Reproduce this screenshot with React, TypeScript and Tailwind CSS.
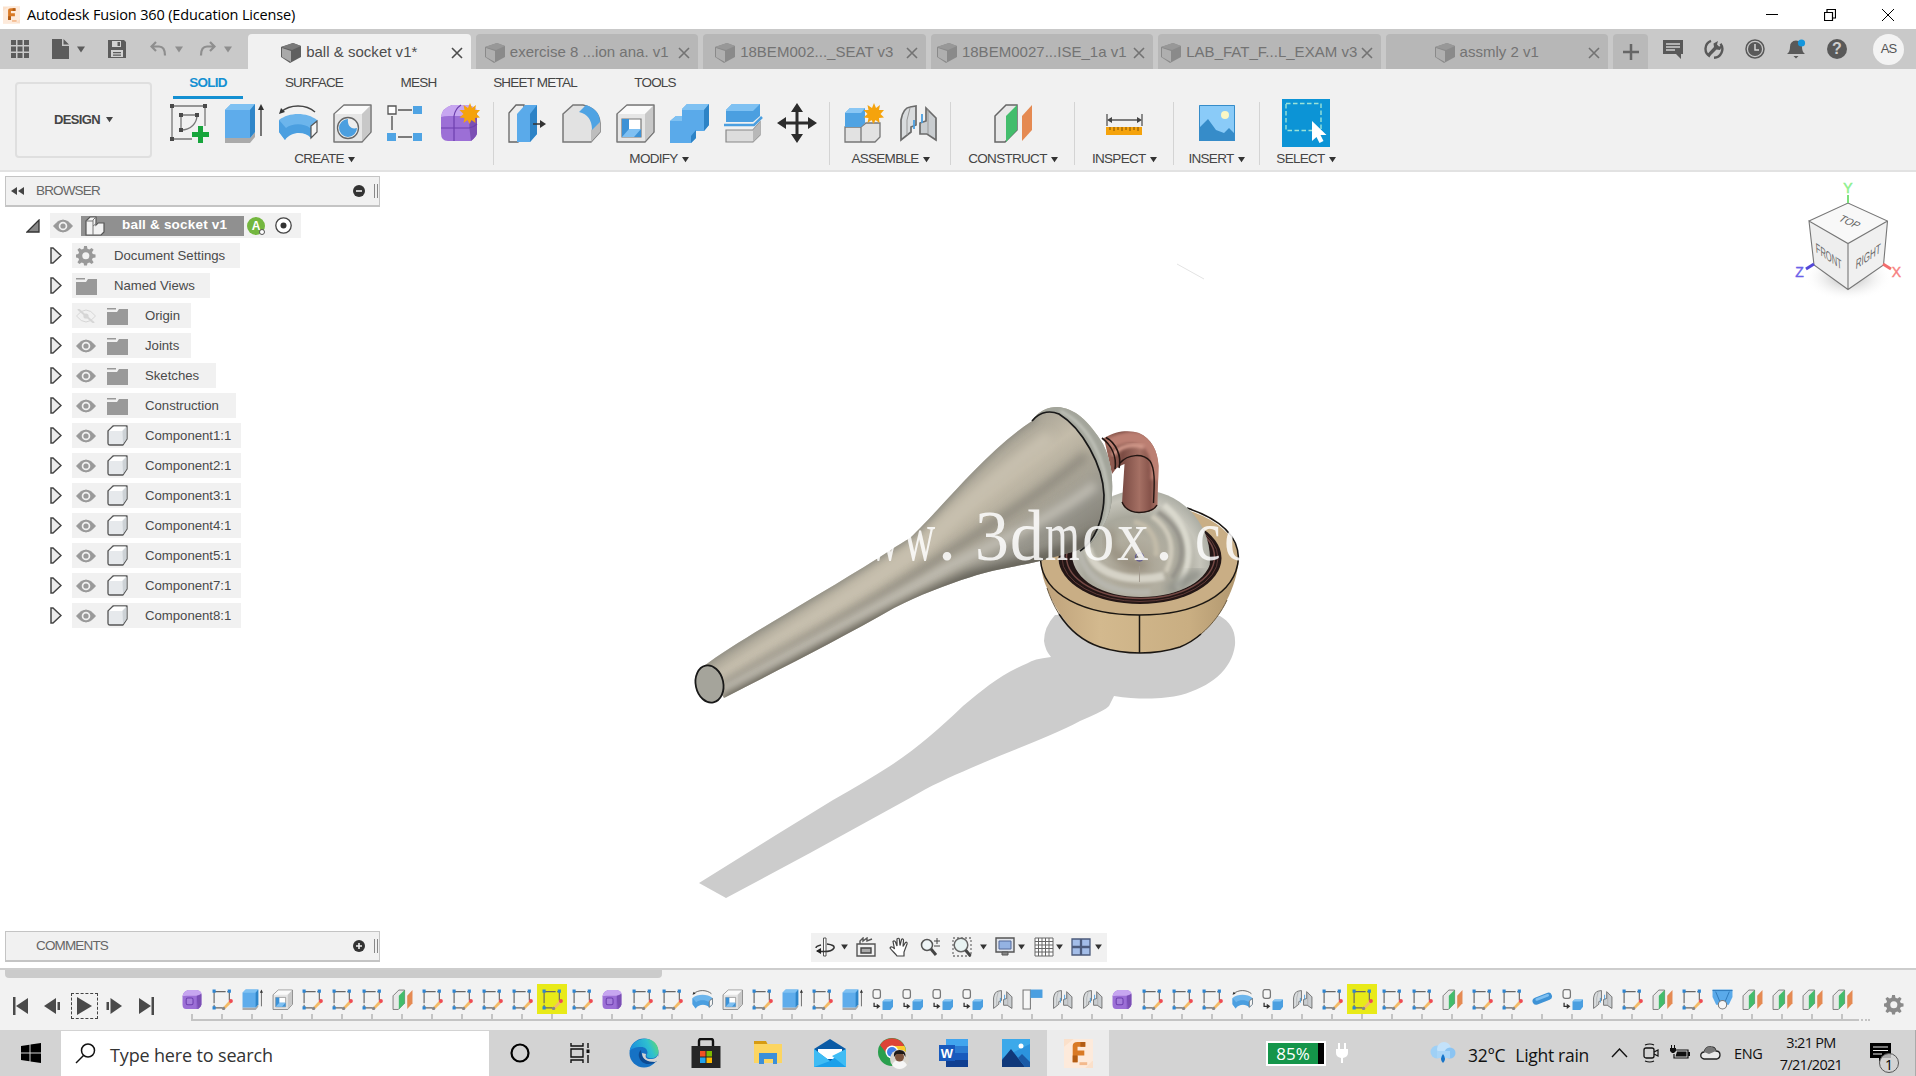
import type { ReactNode } from 'react';
import { clsx } from 'clsx';

type IconProps = { className?: string };

function Svg({ className, box = '0 0 40 40', children }: IconProps & { box?: string; children: ReactNode }) {
  return (
    <svg viewBox={box} className={clsx('shrink-0', className)} fill="none">
      {children}
    </svg>
  );
}

const Caret = ({ className = 'w-2 h-[7px] text-[#444]' }: IconProps) => (
  <Svg box="0 0 8 7" className={className}>
    <path d="M0 0.5h8L4 6.5z" fill="currentColor" />
  </Svg>
);

/* ---------- modelling icons ---------- */

const star = 'M30 0l2 5 4-3-1 5 5 0-3.5 4 3.5 3.500-5 0.500 0.500 5-4-3-2 4-2-4-4 3 1-5-5-0.500 4-3.500-4-4 5 0-1-5 4.500 3z';

const SketchIcon = ({ className }: IconProps) => (
  <Svg className={className}>
    <path d="M2 3h33M2 3v33M35 3v20M2 36h20" stroke="#777" strokeWidth="1.3" />
    <path d="M11 12h16c0 8-6 15-16 15z" stroke="#777" strokeWidth="1.3" />
    <path d="M0 1h4v4H0zM33 1h4v4h-4zM0 34h4v4H0zM9 10h4v4H9zM25 10h4v4h-4zM9 25h4v4H9z" fill="#4a4a4a" />
    <path d="M28 23h5v6h6v5h-6v6h-5v-6h-6v-5h6z" fill="#17a53c" />
  </Svg>
);

const TimelineSketch = ({ className }: IconProps) => (
  <Svg className={className}>
    <path d="M4 5h29v17M4 5v31h17" stroke="#666" strokeWidth="2.200" strokeDasharray="22 3" />
    <path d="M1 1h6v6H1zM30 1h6v6h-6zM1 33h6v6H1z" fill="#2f86d2" />
    <path d="M21 35L34 21l4 4-12 12-6 1z" fill="#f3bb68" />
    <circle cx="36" cy="23" r="3.800" fill="#ee4a55" />
    <circle cx="22" cy="37" r="3.200" fill="#888" />
  </Svg>
);

const ExtrudeIcon = ({ className }: IconProps) => (
  <Svg className={className}>
    <path d="M1 35h25l5-6v5l-5 6H1z" fill="#aaa" />
    <path d="M1 7l6-6h24v28l-5 6H1z" fill="#5eaceb" />
    <path d="M1 7l6-6h24l-5 6z" fill="#7fc1f2" />
    <path d="M26 7l5-6v28l-5 6z" fill="#2f86c9" />
    <path d="M37 33V5" stroke="#333" strokeWidth="1.300" />
    <path d="M34 7l3-6 3 6z" fill="#333" />
  </Svg>
);

const RevolveIcon = ({ className }: IconProps) => (
  <Svg className={className}>
    <path d="M1 17c10-8 28-8 38 0v12l-6 6c-1-3-7-6-13-6s-12 3-13 8L1 29z" fill="#6cb5ec" />
    <path d="M1 17l7 8c6-5 18-5 24 0l7-8v12l-6 6c-6-7-20-7-26 2L1 29z" fill="#4b9fe0" />
    <path d="M33 23l6-5v11l-6 6z" fill="#f5f5f5" stroke="#555" strokeWidth="1.200" />
    <path d="M3 9C12 1 28 1 37 9" stroke="#444" strokeWidth="1.500" />
    <path d="M1 11l2-6 4 4z" fill="#333" />
  </Svg>
);

function Box({ edge = '#777' }: { edge?: string }) {
  return (
    <>
      <path d="M2 11L12 2h27v27l-9 10H2z" fill="#e6e6e6" stroke={edge} strokeWidth="1.500" strokeLinejoin="round" />
      <path d="M3 11L12 3h26l-8 8z" fill="#fafafa" />
      <path d="M30 11l8-8v26l-8 9z" fill="#c8c8c8" />
    </>
  );
}

const HoleIcon = ({ className }: IconProps) => (
  <Svg className={className}>
    <Box />
    <circle cx="16" cy="25" r="10.500" fill="#eee" stroke="#666" strokeWidth="1.300" />
    <path d="M16 16a9 9 0 109 9c-6 2-10-3-9-9z" fill="#4b9fe0" />
  </Svg>
);

const PatternIcon = ({ className }: IconProps) => (
  <Svg className={className}>
    <path d="M12 7h14M6 13v14M12 34h14" stroke="#555" strokeWidth="1.400" />
    <path d="M2 3h8v8H2z" fill="#fff" stroke="#555" strokeWidth="1.300" />
    <path d="M27 3h9v8h-9zM1 30h9v8H1zM27 30h9v8h-9z" fill="#4fa4e4" />
  </Svg>
);

const FormIcon = ({ className, plain }: IconProps & { plain?: boolean }) => (
  <Svg className={className}>
    <path d="M1 14Q2 5 12 2h16q9 2 9 10v18q0 3-6 8H8q-7 0-7-8z" fill="#9c6fd6" />
    <path d="M1 14Q2 5 12 2h16q9 2 9 6-4 5-10 5H9q-5 0-8 1z" fill="#c7a6f0" />
    <path d="M29 13q8-3 8-5v22q0 3-6 8-2-12-2-25z" fill="#7b4fb4" />
    <path d={plain ? 'M29 13v25' : 'M14 13v25M1 25h28q5-1 8-4M14 13q1-7 7-11'} stroke="#6d3fae" strokeWidth="1.200" />
    {plain ? <rect x="8" y="17" width="13" height="13" rx="3" fill="#a780dc" stroke="#6d3fae" strokeWidth="2" /> : <path d={star} fill="#f5a30c" />}
  </Svg>
);

const PressPullIcon = ({ className }: IconProps) => (
  <Svg className={className}>
    <path d="M2 10l7-8h8v30l-6 7H2z" fill="#eee" stroke="#666" strokeWidth="1.300" />
    <path d="M10 11l8-9h12v29l-7 8H10z" fill="#5aaaea" />
    <path d="M23 11l7-9v29l-7 8z" fill="#2d83c6" />
    <path d="M26 21h9" stroke="#333" strokeWidth="1.500" />
    <path d="M33 17l6 4-6 4z" fill="#333" />
  </Svg>
);

const FilletIcon = ({ className }: IconProps) => (
  <Svg className={className}>
    <path d="M2 11L12 2h10q16 4 17 18v9l-9 10H2z" fill="#e2e2e2" stroke="#777" strokeWidth="1.500" />
    <path d="M30 27l9-9v11l-9 10z" fill="#bdbdbd" />
    <path d="M18 9l7-7q14 5 14 17l-8 8Q31 12 18 9z" fill="#4fa3e3" />
  </Svg>
);

const ShellIcon = ({ className }: IconProps) => (
  <Svg className={className}>
    <Box />
    <path d="M7 16h19v18H7z" fill="#fff" stroke="#777" strokeWidth="1.200" />
    <path d="M7 16l7 0v10h12v8H7z" fill="#3d92d6" />
    <path d="M14 26h12l-7 8H7z" fill="#7fc0f2" />
  </Svg>
);

const CombineIcon = ({ className }: IconProps) => (
  <Svg className={className}>
    <path d="M1 18l6-5h6V6l5-5h22v21l-5 6h-8v7l-5 5H1z" fill="#5aaaea" />
    <path d="M13 6l5-5h22l-5 6H13zM1 18l6-5h6v5z" fill="#7fc1f2" />
    <path d="M35 7l5-6v21l-5 6zM22 33l5-6v8l-5 5z" fill="#2d83c6" />
  </Svg>
);

const SplitIcon = ({ className }: IconProps) => (
  <Svg className={className}>
    <path d="M3 7l6-6h28v12l-7 6H3z" fill="#4b9fe0" />
    <path d="M3 7l6-6h28l-7 7H3z" fill="#7fc1f2" />
    <path d="M1 22h30l8-8" stroke="#4b9fe0" strokeWidth="2.500" />
    <path d="M3 27h27l7-8v13l-7 7H3z" fill="#ddd" stroke="#888" strokeWidth="1.200" />
    <path d="M30 27l7-8v13l-7 7z" fill="#b8b8b8" />
  </Svg>
);

const MoveIcon = ({ className }: IconProps) => (
  <Svg className={className}>
    <path d="M20 5v30M5 20h30" stroke="#2c2c2c" strokeWidth="3" />
    <path d="M20 0l6 9H14zM20 40l6-9H14zM0 20l9-6v12zM40 20l-9-6v12z" fill="#2c2c2c" />
  </Svg>
);

const NewComponentIcon = ({ className }: IconProps) => (
  <Svg className={className}>
    <path d="M1 24h16v15H1zM17 24l5-4h14v14l-5 5H17z" fill="#e2e2e2" stroke="#777" strokeWidth="1.300" />
    <path d="M1 10l5-5h15v15l-4 4H1z" fill="#4fa3e3" />
    <path d="M1 10l5-5h15l-4 5z" fill="#8ac7f4" />
    <path d={star} fill="#f5a30c" />
  </Svg>
);

const JointIcon = ({ className }: IconProps) => (
  <Svg className={className}>
    <path d="M3 17Q5 5 12 4l6-1v19l-5 2v5l-10 8z" fill="#d9dcde" stroke="#6b6b6b" strokeWidth="1.700" />
    <path d="M38 37l-9-6H22V20l6-2V5l10 10z" fill="#c9cdd0" stroke="#6b6b6b" strokeWidth="1.700" />
    <path d="M16 17v9M24 11v9" stroke="#4b9fe0" strokeWidth="1.800" />
    <path d="M12 5l-3 12v15M30 6v25" stroke="#999" />
  </Svg>
);

const ConstructIcon = ({ className }: IconProps) => (
  <Svg className={className}>
    <path d="M2 13L13 2h11v25L12 39H2z" fill="#e8e8e8" stroke="#666" strokeWidth="1.500" />
    <path d="M13 13L24 2v25L13 39z" fill="#43bd6c" />
    <path d="M29 13L39 2v25L29 38z" fill="#e58a52" />
  </Svg>
);

const InspectIcon = ({ className }: IconProps) => (
  <Svg className={className}>
    <path d="M3 11v12M38 11v12M5 17h30" stroke="#555" strokeWidth="1.300" />
    <path d="M3 17l5-3v6zM38 17l-5-3v6z" fill="#444" />
    <path d="M2 24h36v8H2z" fill="#f5a30c" />
    <path d="M6 24v3M10 24v4M14 24v3M18 24v4M22 24v3M26 24v4M30 24v3M34 24v4" stroke="#805000" />
  </Svg>
);

const InsertIcon = ({ className }: IconProps) => (
  <Svg className={className}>
    <path d="M2 2h36v36H2z" fill="#8acbf8" />
    <path d="M2 25l9-9 8 11 8 3 5-5 6 6v7H2z" fill="#368cc9" />
    <circle cx="28" cy="12" r="4" fill="#fbf7c4" />
    <path d="M2.500 2.500h35v35h-35z" stroke="#368cc9" />
  </Svg>
);

const SelectIcon = ({ className }: IconProps) => (
  <Svg box="0 0 48 48" className={className}>
    <path d="M0 0h48v48H0z" fill="#0c94d6" />
    <path d="M4 4.500h35v27H4z" stroke="#9be3d8" strokeWidth="1.400" strokeDasharray="4.500 2.500" />
    <path d="M30 22v20l4.500-4 3 6 4-2-3-6h6z" fill="#fff" />
  </Svg>
);

const ComponentStep = ({ className }: IconProps) => (
  <Svg className={className}>
    <rect x="2" y="1" width="14" height="17" rx="4" fill="#f6f6f6" stroke="#777" strokeWidth="2.400" />
    <path d="M4 26v7h6" stroke="#333" strokeWidth="2.500" />
    <path d="M9 28l7 5-7 5z" fill="#333" />
    <path d="M20 24l4-4h16v14l-5 6H20z" fill="#4b9fe0" />
    <path d="M20 24l4-4h16l-5 4z" fill="#8ac7f4" />
  </Svg>
);

const GroundStep = ({ className }: IconProps) => (
  <Svg className={className}>
    <path d="M2 2h14v36H2z" fill="#f6f6f6" stroke="#777" strokeWidth="2" />
    <path d="M16 1h23v16H16z" fill="#4b9fe0" />
  </Svg>
);

const CylinderStep = ({ className }: IconProps) => (
  <Svg className={className}>
    <path d="M8 23l23-9" stroke="#3f93d6" strokeWidth="14" strokeLinecap="round" />
    <path d="M9 20l21-8" stroke="#7fbff0" strokeWidth="5" strokeLinecap="round" />
  </Svg>
);

const ConeStep = ({ className }: IconProps) => (
  <Svg className={className}>
    <path d="M1 1h38v14l-7 15H8L1 15z" fill="#5aaaea" />
    <path d="M1 3h38M7 5l8 19h10l8-19" stroke="#2d78b8" strokeWidth="1.800" />
    <circle cx="20" cy="30" r="8" fill="#f6f6f6" stroke="#777" strokeWidth="2" />
  </Svg>
);

/* ---------- title and document bar ---------- */

const FusionLogo = ({ className }: IconProps) => (
  <Svg box="0 0 30 30" className={className}>
    <path d="M0 0h30v30H0z" fill="#fbe0ca" />
    <path d="M0 8l10-8h20v22l-8 8H0z" fill="#fdeadb" />
    <path d="M9 7q0-4 5-4h8v5h-8v4h7v5h-7v7H9z" fill="#d97a25" />
    <path d="M9 17h5v7H9zM17 3h5v5h-5z" fill="#b25c14" />
    <path d="M16 24h8v3h-8z" fill="#f3b98c" />
  </Svg>
);

const PartCube = ({ className }: IconProps) => (
  <Svg box="0 0 20 20" className={className}>
    <path d="M0 4L12 0l8 3v11l-11 6-9-6z" fill="#5f5f5f" />
    <path d="M1 5l9 3v11l-9-5z" fill="#a9a9a9" />
    <path d="M0 4L12 0l8 3-9 4z" fill="#7a7a7a" />
  </Svg>
);

function TitleBar() {
  return (
    <div className="flex h-[29px] items-center bg-white font-['Open_Sans','Noto_Sans',sans-serif] text-black">
      <FusionLogo className="ml-[3px] h-[18px] w-[17px]" />
      <span className="ml-[7px] text-[14.500px] tracking-[-0.15px]">Autodesk Fusion 360 (Education License)</span>
      <div className="ml-auto mr-[22px] flex items-center gap-[46px]">
        <Svg box="0 0 12 12" className="size-3">
          <path d="M0 5.500h12" stroke="#000" />
        </Svg>
        <Svg box="0 0 12 12" className="size-3">
          <path d="M0.500 3.500h8v8h-8zM3 3V0.500h8.500V9H9" stroke="#000" strokeWidth="1.200" />
        </Svg>
        <Svg box="0 0 12 12" className="size-3">
          <path d="M0 0l12 12M12 0L0 12" stroke="#000" />
        </Svg>
      </div>
    </div>
  );
}

const docTabs = ['exercise 8 ...ion ana. v1', '18BEM002..._SEAT v3', '18BEM0027...ISE_1a v1', 'LAB_FAT_F...L_EXAM v3', 'assmly 2 v1'];

function DocTab({ title, active }: { title: string; active?: boolean }) {
  return (
    <div
      className={clsx(
        'flex h-[35px] w-[222.500px] shrink-0 items-center rounded-t pt-[2px] pr-[8px]',
        active ? 'bg-[#f1f1f1] text-[#4d4d4d]' : 'bg-[#b7b7b7] text-[#737373]'
      )}
    >
      <div className="flex flex-1 items-center justify-center gap-[5px] whitespace-nowrap">
        <PartCube className={clsx('size-[20px]', !active && 'opacity-50')} />
        <span className="text-[15px] tracking-[0.02px]">{title}</span>
      </div>
      <Svg box="0 0 12 12" className="size-3">
        <path d="M1 1l10 10M11 1L1 11" stroke="currentColor" strokeWidth="1.600" />
      </Svg>
    </div>
  );
}

function DocumentBar() {
  return (
    <div className="flex h-10 items-end bg-[#c9c9c9]">
      <div className="flex h-10 w-[248px] shrink-0 items-center text-[#5c5c5c]">
        <Svg box="0 0 18 18" className="ml-[11px] size-[18px]">
          <path
            d="M0 0h5v5H0zM6.500 0h5v5h-5zM13 0h5v5h-5zM0 6.500h5v5H0zM6.500 6.500h5v5h-5zM13 6.500h5v5h-5zM0 13h5v5H0zM6.500 13h5v5h-5zM13 13h5v5h-5z"
            fill="currentColor"
          />
        </Svg>
        <Svg box="0 0 17 20" className="ml-[23px] h-5 w-[17px]">
          <path d="M0 0h10v7h7v13H0zM11.500 0L17 5.500h-5.500z" fill="currentColor" />
        </Svg>
        <Caret className="ml-2 h-[7px] w-2" />
        <Svg box="0 0 18 18" className="ml-[23px] size-[18px]">
          <path d="M0 0h16l2 2v16H0z" fill="currentColor" />
          <path d="M4 1h9v6H4zM3 10h12v7H3z" fill="#d2d2d2" />
          <path d="M9.500 2h2.500v4H9.500zM5 12h8v1.200H5zM5 14.500h8v1.200H5z" fill="currentColor" />
        </Svg>
        <Svg box="0 0 17 16" className="ml-6 h-4 w-[17px] text-[#8e8e8e]">
          <path d="M6 1L1.500 5.500 6 10M2 5.500h7q6 0 6 9" stroke="currentColor" strokeWidth="2.200" />
        </Svg>
        <Caret className="ml-2 h-[7px] w-2 text-[#8e8e8e]" />
        <Svg box="0 0 17 16" className="ml-[16px] h-4 w-[17px] text-[#8e8e8e]">
          <path d="M11 1l4.500 4.500L11 10M15 5.500H8q-6 0-6 9" stroke="currentColor" strokeWidth="2.200" />
        </Svg>
        <Caret className="ml-2 h-[7px] w-2 text-[#8e8e8e]" />
      </div>
      <div className="flex gap-[5px]">
        <DocTab title="ball & socket v1*" active />
        {docTabs.map((t) => (
          <DocTab key={t} title={t} />
        ))}
        <div className="grid h-[35px] w-[35px] place-items-center rounded-t bg-[#b9b9b9]">
          <Svg box="0 0 16 16" className="size-4">
            <path d="M8 0v16M0 8h16" stroke="#666" strokeWidth="2.500" />
          </Svg>
        </div>
      </div>
      <div className="ml-auto mr-3 flex h-10 items-center gap-[21px] text-[#595959]">
        <Svg box="0 0 20 20" className="size-5">
          <path d="M0 1h20v14h-2v5l-5-5H0z" fill="currentColor" />
          <path d="M3 5h14M3 8h14M3 11h9" stroke="#cfcfcf" strokeWidth="1.300" />
        </Svg>
        <Svg box="0 0 20 20" className="size-5">
          <path d="M7 1.800A8.700 8.700 0 006 17.500M10 18.700a8.700 8.700 0 006.500-14" stroke="currentColor" strokeWidth="2.400" />
          <path d="M3 15.500l7-7.500-.5-3.500L14 2l-1 3.500 2 2 3.500-1-2.500 4.500-3.500-.5-7 7z" fill="currentColor" />
        </Svg>
        <Svg box="0 0 20 20" className="size-5">
          <circle cx="10" cy="10" r="9" stroke="currentColor" strokeWidth="1.500" />
          <circle cx="10" cy="10" r="7" fill="currentColor" />
          <path d="M10 5v6h4" stroke="#d5d5d5" strokeWidth="1.500" />
        </Svg>
        <Svg box="0 0 20 20" className="size-5">
          <path d="M1 15q3-2 3-7 0-6 6-6.500 6 .5 6 6.500 0 5 3 7zM7.500 17h5L10 19.500z" fill="currentColor" />
          <circle cx="15.500" cy="4" r="3.600" fill="#1396dd" />
        </Svg>
        <div className="grid size-5 place-items-center rounded-full bg-[#595959] text-[16px] font-bold leading-none text-[#cfcfcf]">?</div>
        <div className="ml-[5px] grid size-[31px] place-items-center rounded-full bg-[#f3f3f3] text-[13px] tracking-[-1px] text-[#555]">AS</div>
      </div>
    </div>
  );
}

/* ---------- ribbon ---------- */

const groups = [
  { label: 'CREATE', width: 'w-[339px]', icons: [SketchIcon, ExtrudeIcon, RevolveIcon, HoleIcon, PatternIcon, FormIcon] },
  { label: 'MODIFY', width: 'w-[336px]', icons: [PressPullIcon, FilletIcon, ShellIcon, CombineIcon, SplitIcon, MoveIcon] },
  { label: 'ASSEMBLE', width: 'w-[121px]', icons: [NewComponentIcon, JointIcon] },
  { label: 'CONSTRUCT', width: 'w-[124px]', icons: [ConstructIcon] },
  { label: 'INSPECT', width: 'w-[98.500px]', icons: [InspectIcon] },
  { label: 'INSERT', width: 'w-[86px]', icons: [InsertIcon] },
  { label: 'SELECT', width: 'w-[93px]', icons: [SelectIcon] },
];

const ribbonTabs = [
  { label: 'SOLID', width: 'w-[70px]' },
  { label: 'SURFACE', width: 'w-[142px]' },
  { label: 'MESH', width: 'w-[67px]' },
  { label: 'SHEET METAL', width: 'w-[166px]' },
  { label: 'TOOLS', width: 'w-[74px]' },
];

function Ribbon() {
  return (
    <div className="flex h-[103px] border-b-2 border-[#e2e2e2] bg-[#f1f1f1] text-[#454545]">
      <div className="ml-[15px] mt-[13px] flex h-[76px] w-[137px] items-center justify-center rounded-[4px] border-2 border-[#dfdfdf] pb-px text-[13px] font-semibold">
        <span className="tracking-[-0.6px]">DESIGN</span>
        <Caret className="ml-[6px] h-[7px] w-[7px]" />
      </div>
      <div className="flex flex-col">
        <div className="ml-[21px] flex h-[30px]">
          {ribbonTabs.map((t, i) => (
            <div
              key={t.label}
              className={clsx(
                'flex justify-center pt-1 text-[13.500px] leading-5 tracking-[-0.8px]',
                t.width,
                i === 0 && 'border-b-[3px] border-[#1490d2] font-semibold text-[#1490d2]'
              )}
            >
              <span className="whitespace-nowrap">{t.label}</span>
            </div>
          ))}
        </div>
        <div className="ml-[3px] flex">
          {groups.map((g) => (
            <div key={g.label} className={clsx('relative flex h-[70px] flex-col items-center', g.width)}>
              <div className="flex h-[47px] items-center gap-[14px]">
                {g.icons.map((Icon, i) => (
                  <Icon key={i} className={g.label === 'SELECT' ? 'size-12' : 'size-10'} />
                ))}
              </div>
              <div
                className={clsx(
                  'mt-[3px] flex items-center gap-1 whitespace-nowrap text-[13.500px] leading-5 tracking-[-0.7px]',
                  g.label === 'MODIFY' && 'mr-[6px]'
                )}
              >
                {g.label}
                <Caret className="h-[7px] w-[7px] text-[#333]" />
              </div>
              {g.label !== 'SELECT' && <div className="absolute right-0 top-[3px] h-[63px] w-px bg-[#d4d4d4]" />}
            </div>
          ))}
        </div>
      </div>
    </div>
  );
}

/* ---------- browser ---------- */

const Eye = ({ className, off }: IconProps & { off?: boolean }) => (
  <Svg box="0 0 20 14" className={clsx('h-[14px] w-5', off ? 'text-[#d6d6d6]' : 'text-[#999]', className)}>
    <path d="M0.500 7Q10-5 19.500 7 10 19 0.500 7z" fill={off ? 'none' : 'currentColor'} stroke="currentColor" />
    <circle cx="10" cy="7" r="4.300" fill="#f1f1f1" />
    <circle cx="10" cy="7" r="2.600" fill="currentColor" />
    {off && <path d="M2 0l16 14" stroke="currentColor" strokeWidth="2" />}
  </Svg>
);

const Folder = () => (
  <Svg box="0 0 21 18" className="h-[18px] w-[21px]">
    <path d="M0 1h9v1.500H0zM0 5h10l2-3h9v16H0z" fill="#999" />
  </Svg>
);

const Body = () => (
  <Svg box="0 0 21 21" className="size-[21px]">
    <path d="M1 6l5-5h14v13l-4 6H3q-2 0-2-2z" fill="#e6e9ec" stroke="#555" strokeWidth="1.300" strokeLinejoin="round" />
    <path d="M2 6l5-4.500h12L15 6z" fill="#fff" />
    <path d="M15.500 6L19.500 2v12l-3.500 5z" fill="#cdd2d6" />
  </Svg>
);

const gearPath =
  'M8.500 0h3l.5 3 2 .8L16.500 2l2 2-1.700 2.500.8 2 2.900.5v3l-2.900.5-.8 2 1.700 2.500-2 2-2.500-1.700-2 .8-.5 2.400h-3L8 18l-2-.8L3.500 19l-2-2 1.700-2.500-.8-2L0 12V9l2.400-.5.8-2L1.500 4l2-2L6 3.700 8 3z';

const Gear = ({ className }: IconProps) => (
  <Svg box="0 0 21 21" className={className}>
    <path d={gearPath} fill="currentColor" />
    <circle cx="10.300" cy="10.300" r="3.700" fill="#f1f1f1" />
  </Svg>
);

function Panel({ title, sign }: { title: string; sign: '-' | '+' }) {
  return (
    <div className="flex h-[31px] w-[375px] items-center border border-b-2 border-[#c4c4c4] bg-[#f1f1f1] text-[#666]">
      <div className="w-[30px] pl-[5px]">
        {sign === '-' && (
          <Svg box="0 0 13 8" className="h-2 w-[13px]">
            <path d="M6 0v8L0 4zM13 0v8L7 4z" fill="#444" />
          </Svg>
        )}
      </div>
      <span className="text-[13.500px] tracking-[-0.85px]">{title}</span>
      <Svg box="0 0 12 12" className="ml-auto size-3">
        <circle cx="6" cy="6" r="6" fill="#333" />
        <path d={sign === '-' ? 'M3 6h6' : 'M3 6h6M6 3v6'} stroke="#f1f1f1" strokeWidth="1.600" />
      </Svg>
      <div className="ml-[9px] mr-px h-[14px] w-1 border-x border-[#888]" />
    </div>
  );
}

type Row = { name: string; kind: 'gear' | 'folder' | 'body'; width: string; eye?: 'on' | 'off' };

const rows: Row[] = [
  { name: 'Document Settings', kind: 'gear', width: 'w-[168px]' },
  { name: 'Named Views', kind: 'folder', width: 'w-[138px]' },
  { name: 'Origin', kind: 'folder', width: 'w-[119px]', eye: 'off' },
  { name: 'Joints', kind: 'folder', width: 'w-[119px]', eye: 'on' },
  { name: 'Sketches', kind: 'folder', width: 'w-[144px]', eye: 'on' },
  { name: 'Construction', kind: 'folder', width: 'w-[164px]', eye: 'on' },
  ...[1, 2, 3, 4, 5, 7, 8].map((n): Row => ({ name: `Component${n}:1`, kind: 'body', width: 'w-[169px]', eye: 'on' })),
];

function BrowserTree() {
  return (
    <div className="flex flex-col gap-[5px] pt-[7px] text-[13.200px] text-[#4a4a4a]">
      <div className="flex items-center">
        <Svg box="0 0 14 14" className="ml-[26px] size-[14px]">
          <path d="M1 13L13 1v12z" fill="#888" stroke="#333" strokeWidth="1.300" />
        </Svg>
        <div className="ml-[10px] flex h-[25px] w-[251px] items-center bg-[#f1f1f1]">
          <Eye className="ml-[3px]" />
          <div className="ml-[8px] flex h-5 w-[163px] items-center bg-[#909090] pl-1 text-white">
            <Svg box="0 0 20 20" className="size-5">
              <path d="M1 5l4-4h6v8l2-2h6v9l-3 3H1z" fill="#f2f2f2" stroke="#555" strokeWidth="1.200" />
              <path d="M8 19V4l3-3M8 10l4-3M1 5h7" stroke="#777" strokeWidth="1" />
            </Svg>
            <span className="ml-[17px] text-[13.500px] font-bold tracking-[0.2px]">ball & socket v1</span>
          </div>
          <div className="relative ml-[3px] grid size-[18px] place-items-center rounded-full bg-[#74b73f] text-[12px] font-bold text-white">
            A
            <span className="absolute bottom-0 right-0 size-[6px] rounded-full border border-[#555] bg-white" />
          </div>
          <Svg box="0 0 17 17" className="ml-[10px] size-[17px]">
            <circle cx="8.500" cy="8.500" r="7.700" fill="#fff" stroke="#444" strokeWidth="1.300" />
            <circle cx="8.500" cy="8.500" r="3" fill="#333" />
          </Svg>
        </div>
      </div>
      {rows.map((r) => (
        <div key={r.name} className="flex items-center">
          <Svg box="0 0 12 17" className="ml-[50px] h-[17px] w-3">
            <path d="M1 1h2l8 7.500L3 16H1z" fill="#ececec" stroke="#444" strokeWidth="1.500" />
          </Svg>
          <div className={clsx('ml-[10px] flex h-[25px] items-center whitespace-nowrap bg-[#f1f1f1] pl-[4px]', r.width)}>
            {r.eye && <Eye off={r.eye === 'off'} className="mr-[11px]" />}
            {r.kind === 'gear' && <Gear className="mr-px size-5 text-[#999]" />}
            {r.kind === 'folder' && <Folder />}
            {r.kind === 'body' && <Body />}
            <span className="ml-[17px] tracking-[-0.02px]">{r.name}</span>
          </div>
        </div>
      ))}
    </div>
  );
}

/* ---------- viewport ---------- */

const stem =
  'M704 666C735 643 790 612 864 567C885 554 898 545 910 538C940 510 985 452 1032 421C1038 411 1048 407 1057 407C1075 408 1089 421 1103 444C1111 460 1113 478 1112 494C1112 512 1105 526 1091 543C1082 551 1060 555 1040 561C1015 567 990 570 971 577C945 585 920 595 894 608C840 639 780 669 724 698Z';

const bowl = 'M1040.500 557C1041 572 1044 582 1047 588C1053 605 1062 618 1073 630C1081 638 1090 643 1100 647C1125 655 1155 655 1180 647Q1192 642 1200 635C1213 624 1222 611 1227 600C1233 588 1238 574 1239 556Z';

const pipe =
  'M1104 438C1117 430 1130 430 1139 433C1151 438 1158 451 1158.500 466L1157.500 505Q1155 512.500 1139.500 512.500Q1124 511 1122 503L1124.500 464Q1117 466 1112 474Z';

// half-width glyph cells, 36px apart
const watermark = [
  { ch: 'w', x: 833, s: 0.62 },
  { ch: 'w', x: 868, s: 0.62 },
  { ch: 'w', x: 903, s: 0.62 },
  { ch: '.', x: 938, s: 1 },
  { ch: '3', x: 975, s: 0.94 },
  { ch: 'd', x: 1010, s: 0.94 },
  { ch: 'm', x: 1045, s: 0.62 },
  { ch: 'o', x: 1082, s: 0.9 },
  { ch: 'x', x: 1117, s: 0.88 },
  { ch: '.', x: 1155, s: 1 },
  { ch: 'c', x: 1195, s: 0.8 },
  { ch: 'o', x: 1224, s: 0.9 },
];

function Model() {
  return (
    <svg viewBox="0 172 1916 796" className="absolute inset-0 h-full w-full" fill="none">
      <defs>
        <linearGradient id="steel" gradientUnits="userSpaceOnUse" x1="950" y1="480" x2="1032" y2="590">
          <stop offset="0" stopColor="#a9a496" />
          <stop offset="0.250" stopColor="#c4bcaa" />
          <stop offset="0.450" stopColor="#b0aa9a" />
          <stop offset="0.700" stopColor="#98968d" />
          <stop offset="1" stopColor="#7e7b70" />
        </linearGradient>
        <linearGradient id="brass" x1="0" x2="1">
          <stop offset="0" stopColor="#bda079" />
          <stop offset="0.300" stopColor="#d3b98e" />
          <stop offset="0.750" stopColor="#c9ae82" />
          <stop offset="1" stopColor="#b0966e" />
        </linearGradient>
        <linearGradient id="copper" x1="0" x2="1">
          <stop offset="0" stopColor="#9c6558" />
          <stop offset="0.350" stopColor="#7c4d45" />
          <stop offset="0.650" stopColor="#a57064" />
          <stop offset="0.850" stopColor="#86534a" />
          <stop offset="1" stopColor="#b0796c" />
        </linearGradient>
        <radialGradient id="ball" cx="0.450" cy="0.550" r="0.600">
          <stop offset="0" stopColor="#a39b8b" />
          <stop offset="0.350" stopColor="#b2aea0" />
          <stop offset="0.600" stopColor="#a9a89c" />
          <stop offset="0.800" stopColor="#c6c5bb" />
          <stop offset="1" stopColor="#a3a59c" />
        </radialGradient>
        <radialGradient id="cubeShade">
          <stop offset="0" stopColor="#888" stopOpacity="0.700" />
          <stop offset="1" stopColor="#fff" stopOpacity="0" />
        </radialGradient>
        <filter id="soft" x="-20%" y="-20%" width="140%" height="140%">
          <feGaussianBlur stdDeviation="4" />
        </filter>
        <filter id="fine" x="-20%" y="-20%" width="140%" height="140%">
          <feGaussianBlur stdDeviation="1.800" />
        </filter>
        <clipPath id="stemClip">
          <path d={stem} />
        </clipPath>
        <clipPath id="pipeClip">
          <path d={pipe} />
        </clipPath>
        <clipPath id="ballClip">
          <path d="M1060 480H1222V556H1212C1210 580 1180 597 1141 597C1102 597 1074 580 1072 556H1060Z" />
        </clipPath>
      </defs>

      <path d="M1177 264L1204 279" stroke="#e4e4e4" />

      {/* ground shadow */}
      <path
        d="M699 883L726 898L810 853L910 798C930 786 950 777 971 768C1010 751 1050 737 1080 721Q1106 710 1109 706L1114 696C1140 700 1165 699 1181 695C1210 687 1232 670 1235 645C1236 630 1230 622 1220 616L1055 615Q1044 627 1044 641Q1045 650 1051 657Q1033 659 1028 663C1000 675 985 688 963 706C940 728 915 750 890 766Q865 782 833 800L776 835Z"
        fill="#ccc"
      />

      {/* socket */}
      <path d={bowl} fill="url(#brass)" />
      <ellipse cx="1139.500" cy="559" rx="99" ry="56" fill="#c9ae85" />
      <path d="M1187 508C1220 519 1238 536 1238.500 558C1236 595 1195 615 1139.500 615C1084 615 1043 595 1040.500 560" stroke="#1a1612" strokeWidth="1.500" />
      <path d="M1139.500 615V653M1059 614C1068 628 1082 641 1100 647C1125 655 1155 655 1180 647Q1192 642 1201 634" stroke="#1a1612" strokeWidth="1.500" />
      <path d="M1047 588C1050 597 1054 606 1059 614M1201 634C1213 624 1222 611 1227 600" stroke="#6b5a40" />
      <ellipse cx="1140" cy="558" rx="81.500" ry="46" fill="#231615" />
      <ellipse cx="1140" cy="558" rx="78" ry="43.500" stroke="#5f3a37" />
      <ellipse cx="1140.500" cy="557" rx="74" ry="41.500" stroke="#754945" strokeWidth="1.500" />
      <g clipPath="url(#ballClip)">
        <circle cx="1141" cy="559" r="69" fill="url(#ball)" />
        <path d="M1164 505C1192 528 1196 562 1176 588" stroke="#dad9ce" strokeWidth="6" filter="url(#fine)" />
        <path d="M1152 516C1172 530 1176 550 1166 572" stroke="#cfcabb" strokeWidth="5" filter="url(#fine)" />
        <path d="M1158 512C1184 530 1188 556 1172 578" stroke="#94928a" strokeWidth="4" filter="url(#fine)" />
        <path d="M1088 548C1092 574 1130 584 1164 576" stroke="#d6d3c7" strokeWidth="8" filter="url(#fine)" />
        <path d="M1078 545C1084 584 1115 594 1150 592" stroke="#b7b6ad" strokeWidth="6" filter="url(#fine)" />
        <path d="M1168 590L1202 572" stroke="#8b8d86" strokeWidth="9" filter="url(#soft)" />
        <path d="M1112 530C1104 550 1122 567 1146 564" stroke="#8f8676" strokeWidth="6" filter="url(#soft)" />
        <path d="M1134 522C1150 524 1158 540 1156 556" stroke="#c2bba9" strokeWidth="5" filter="url(#fine)" />
        <path d="M1139.500 566V582" stroke="#a39b90" />
      </g>
      <circle cx="1139.500" cy="557" r="4" stroke="#605a92" strokeWidth="1.300" />
      <path d="M1136.500 557h5" stroke="#444" />

      {/* neck */}
      <path d={pipe} fill="url(#copper)" />
      <g clipPath="url(#pipeClip)">
        <path d="M1108 445C1126 434 1142 436 1150 446C1157 456 1157 468 1156 480" stroke="#bb7f72" strokeWidth="11" filter="url(#fine)" />
        <path d="M1112 455C1122 445 1132 443 1144 447" stroke="#d39a8b" strokeWidth="4" filter="url(#fine)" />
      </g>
      <path d="M1120 463C1128 454 1143 453 1150 461C1156 470 1154 488 1153.500 503M1122 502Q1126 512 1139 512.500Q1153 512 1157 505" stroke="#221512" strokeWidth="1.400" />
      <path d="M1102 438C1111 445 1117 456 1115 469M1106 437.500C1116 443 1122 456 1119 468" stroke="#221512" strokeWidth="1.600" />

      {/* stem */}
      <path d={stem} fill="url(#steel)" />
      <g clipPath="url(#stemClip)">
        <path d="M700 662C790 607 880 555 912 532C950 495 990 440 1035 415" stroke="#85847b" strokeWidth="9" filter="url(#soft)" />
        <path d="M716 680C790 630 865 590 925 545C970 500 1005 470 1050 437" stroke="#c7c0af" strokeWidth="13" filter="url(#soft)" />
        <path d="M722 686C800 640 880 600 945 555C1000 518 1040 495 1086 455" stroke="#817e75" strokeWidth="9" filter="url(#soft)" opacity="0.650" />
        <path d="M722 692C800 650 880 606 950 566C1000 540 1050 520 1095 485" stroke="#c4c1b7" strokeWidth="8" filter="url(#soft)" />
        <path d="M724 702C800 664 890 612 970 578C1010 567 1060 560 1098 535" stroke="#66635a" strokeWidth="14" filter="url(#soft)" />
        <path
          d="M1032 421C1041 410 1052 411 1059 414C1082 428 1103 465 1104 495C1104 520 1094 542 1080 551L1120 545V400H1040Z"
          fill="#a3a59b"
        />
        <path d="M1060 411C1088 424 1106 458 1108.500 500Q1108 525 1094 541" stroke="#c3c5bc" strokeWidth="3" filter="url(#fine)" />
      </g>
      <path d="M1032 421C1041 410 1052 411 1059 414C1082 428 1103 465 1104 495C1104 520 1094 542 1080 551" stroke="#181818" strokeWidth="1.700" />
      <ellipse cx="709.500" cy="684" rx="13.800" ry="18.800" transform="rotate(-12 709.5 684)" fill="#a5a49b" stroke="#181818" strokeWidth="1.800" />

      <g fill="#fff" opacity="0.850" fontFamily="'Liberation Serif', serif" fontSize="72">
        {watermark.map((w, i) => (
          <text key={i} transform={`translate(${w.x} 560) scale(${w.s} 1)`}>
            {w.ch}
          </text>
        ))}
      </g>

      {/* view cube */}
      <ellipse cx="1848" cy="277" rx="44" ry="24" fill="url(#cubeShade)" />
      <path d="M1848 203L1887.500 221L1883.500 265L1848 289.500L1814 265L1809 221Z" fill="#f0f0f0" />
      <path d="M1848 203L1887.500 221L1848 243.500L1809 221Z" fill="#f8f8f8" />
      <path d="M1809 221L1848 243.500V289.500L1814 265Z" fill="#eee" />
      <path
        d="M1809 221L1848 203L1887.500 221L1883.500 265L1848 289.500L1814 265L1809 221L1848 243.500L1887.500 221M1848 243.500V289.500"
        stroke="#777"
        strokeWidth="1.100"
      />
      <path d="M1848 195V203" stroke="#7be07b" strokeWidth="2" />
      <path d="M1806 269L1814 264" stroke="#5347d8" strokeWidth="3" />
      <path d="M1891 269L1883 264" stroke="#f36d6d" strokeWidth="3" />
      <g fontFamily="'Liberation Sans', sans-serif" fontSize="14" fill="#666" textAnchor="middle">
        <text x="1848" y="193" fill="#8df08d" stroke="#8df08d" strokeWidth="0.500">
          Y
        </text>
        <text x="1799.500" y="277" fill="#6a60e8" stroke="#6a60e8" strokeWidth="0.400">
          Z
        </text>
        <text x="1896.500" y="277" fill="#f78080" stroke="#f78080" strokeWidth="0.400">
          X
        </text>
        <text transform="matrix(0.720 0.320 -0.600 0.600 1847 224.500)" fontSize="13">TOP</text>
        <text transform="matrix(0.580 0.400 0.060 1.050 1829 261)" fontSize="13">FRONT</text>
        <text transform="matrix(0.620 -0.420 -0.060 1.050 1868 261)" fontSize="13">RIGHT</text>
      </g>
    </svg>
  );
}

function NavBar() {
  return (
    <div className="flex h-[29px] w-[296px] items-center bg-[#f1f1f1] pl-1">
      <Svg box="0 0 20 20" className="size-5">
        <path d="M8.500 1v18h2.500V1z" fill="#fff" stroke="#555" />
        <path d="M12 7q8 1 7 4-3 5-17 3M6 8Q1 9 1 11" stroke="#333" strokeWidth="1.500" />
        <path d="M1 14l5-3v6z" fill="#222" />
      </Svg>
      <Caret className="ml-[6px] h-[6px] w-[7px] text-[#333]" />
      <Svg box="0 0 20 20" className="ml-2 size-5">
        <path d="M1 7h18v12H1zM4 7V4l3-3v3l4-3v3l5-2" stroke="#555" strokeWidth="1.400" />
        <path d="M5 11h10v5H5z" fill="#aaa" stroke="#444" strokeWidth="1.400" />
      </Svg>
      <Svg box="0 0 20 20" className="ml-[13px] size-5">
        <path
          d="M8 19c-2-3-5-5-7-8 1-2 3-1 4.500 1L4 4.500c1-1 2-.5 2.500.5L8 9V2c1-1 2-1 2.300 0L11 8.500l1.500-6c1-1 2-.5 2 .7L14 9.500l2.500-4c1-.7 2 0 1.500 1.500l-3 8v4z"
          fill="#fff"
          stroke="#444"
          strokeWidth="1.200"
        />
      </Svg>
      <Svg box="0 0 20 20" className="ml-[11px] size-5">
        <circle cx="7" cy="8" r="5.500" fill="#eef4f6" stroke="#555" strokeWidth="1.500" />
        <path d="M11 12l5 6" stroke="#444" strokeWidth="3" />
        <path d="M14 4h6M17 1v6M14 9h6" stroke="#444" />
      </Svg>
      <Svg box="0 0 20 20" className="ml-3 size-5">
        <path d="M1 1h18v18H1z" stroke="#777" strokeWidth="1.300" strokeDasharray="2 2" />
        <circle cx="9" cy="8" r="6.800" fill="#e8f3f2" stroke="#666" strokeWidth="1.500" />
        <path d="M13.500 13l5 6" stroke="#444" strokeWidth="3" />
      </Svg>
      <Caret className="ml-[8px] h-[6px] w-[7px] text-[#333]" />
      <Svg box="0 0 20 20" className="ml-2 size-5">
        <path d="M1 1h18v14H1z" fill="#dfe3ea" stroke="#555" strokeWidth="1.400" />
        <path d="M4 4h12v8H4z" fill="#94b2e2" stroke="#53699a" />
        <path d="M7 15h6v3H7z" fill="#888" stroke="#555" />
      </Svg>
      <Caret className="ml-[3px] h-[6px] w-[7px] text-[#333]" />
      <Svg box="0 0 20 20" className="ml-[9px] size-5">
        <path d="M1 1h18v18H1zM4.500 1v18M8 1v18M11.500 1v18M15 1v18M1 4.500h18M1 8h18M1 11.500h18M1 15h18" stroke="#666" fill="#fff" />
      </Svg>
      <Caret className="ml-[2px] h-[6px] w-[7px] text-[#333]" />
      <Svg box="0 0 20 20" className="ml-2 size-5">
        <path d="M1 2h8.500v7.500H1zM10.500 2H19v7.500h-8.500zM1 10.500h8.500V18H1zM10.500 10.500H19V18h-8.500z" fill="#a3bde8" stroke="#4c5b7c" strokeWidth="1.300" />
      </Svg>
      <Caret className="ml-1 h-[6px] w-[7px] text-[#333]" />
    </div>
  );
}

function Viewport() {
  return (
    <div className="relative h-[796px] bg-white">
      <Model />
      <div className="relative flex h-full flex-col pl-[5px] pt-1">
        <Panel title="BROWSER" sign="-" />
        <div className="-ml-[5px] -mt-px">
          <BrowserTree />
        </div>
        <div className="mb-[6px] mt-auto flex items-center">
          <Panel title="COMMENTS" sign="+" />
          <div className="ml-[431px] pt-px">
            <NavBar />
          </div>
        </div>
      </div>
    </div>
  );
}

/* ---------- timeline ---------- */

const PlainForm = ({ className }: IconProps) => <FormIcon className={className} plain />;

const stepIcons = {
  s: TimelineSketch,
  Y: TimelineSketch,
  f: PlainForm,
  e: ExtrudeIcon,
  h: ShellIcon,
  p: ConstructIcon,
  r: RevolveIcon,
  c: ComponentStep,
  j: JointIcon,
  g: GroundStep,
  y: CylinderStep,
  o: ConeStep,
};

// one letter per feature, Y is a highlighted sketch
const steps = 'fsehssspssssYsfssrhsesecccc' + 'jgjjfsssrcjsYsspssycjspsopppp';

function Timeline() {
  return (
    <div className="h-[62px] border-t-2 border-[#cdcdcd] bg-[#f2f2f2]">
      <div className="ml-[5px] h-[8px] w-[657px] rounded-b-[4px] bg-[#cbcbcb]" />
      <div className="flex h-[52px]">
        <div className="flex h-[56px] w-[177px] shrink-0 items-center text-[#4a4a4a]">
          <Svg box="0 0 16 18" className="ml-[13px] h-[18px] w-4">
            <path d="M0 0h2.500v18H0zM15 1v16L3 9z" fill="currentColor" />
          </Svg>
          <Svg box="0 0 17 18" className="ml-[15px] h-[18px] w-[17px]">
            <path d="M12 1v16L0 9zM13.500 5H16v8h-2.500z" fill="currentColor" />
          </Svg>
          <div className="ml-[10px] grid h-[26px] w-[27px] place-items-center border border-dashed border-[#444]">
            <Svg box="0 0 15 18" className="h-[18px] w-[15px]">
              <path d="M0 0l15 9L0 18z" fill="currentColor" />
            </Svg>
          </div>
          <Svg box="0 0 17 18" className="ml-[8px] h-[18px] w-[17px]">
            <path d="M4.500 1v16L16 9zM0.500 5H3v8H0.500z" fill="currentColor" />
          </Svg>
          <Svg box="0 0 16 18" className="ml-[16px] h-[18px] w-4">
            <path d="M0 1v16l12-8zM12.500 0H15v18h-2.500z" fill="currentColor" />
          </Svg>
        </div>
        <div className="flex pt-[6px]">
          {steps.split('').map((k, i) => {
            const Icon = stepIcons[k as keyof typeof stepIcons];
            return (
              <div key={i} className="flex w-[30px] flex-col items-center">
                <div className={clsx('grid h-[30px] w-[30px] place-items-center', k === 'Y' && 'bg-[#e8ea18]')}>
                  <Icon className="size-[21px]" />
                </div>
                <div className="h-[5px] w-[2px] bg-[#c4c4c4]" />
                <div className={clsx('h-[2px] bg-[#c4c4c4]', i === 0 ? 'ml-auto w-4' : 'w-full')} />
              </div>
            );
          })}
          <div className="ml-[-3px] mt-[35px] h-[2px] w-4 border-b-2 border-dotted border-[#c4c4c4]" />
        </div>
        <Gear className="ml-auto mr-[12px] mt-[17px] size-5 text-[#8a8a8a]" />
      </div>
    </div>
  );
}

/* ---------- windows taskbar ---------- */

const apps: { name: string; icon: ReactNode; active?: boolean }[] = [
  {
    name: 'cortana',
    icon: (
      <Svg box="0 0 30 30" className="size-[30px]">
        <circle cx="15" cy="15" r="8.500" stroke="#000" strokeWidth="2.200" />
      </Svg>
    ),
  },
  {
    name: 'task-view',
    icon: (
      <Svg box="0 0 30 30" className="size-[30px]">
        <path d="M4 5v3h12V5M4 25v-3h12v3M4 11h12v8H4zM21 5v5M21 17v8" stroke="#111" strokeWidth="1.400" />
        <path d="M19.500 11.500h3v3.500h-3z" fill="#111" />
      </Svg>
    ),
  },
  {
    name: 'edge',
    icon: (
      <Svg box="0 0 30 30" className="size-[30px]">
        <defs>
          <linearGradient id="edgeTop" x1="0" x2="1" y1="0.300" y2="0">
            <stop offset="0" stopColor="#1c8fdc" />
            <stop offset="0.600" stopColor="#2ec0d0" />
            <stop offset="1" stopColor="#6bdc5f" />
          </linearGradient>
        </defs>
        <circle cx="15" cy="15" r="14.500" fill="#1672c5" />
        <path d="M0.500 14C2-2 28-5 29.500 13c0 6-5 8-9 7-4-.5-3-3-2-5 0-4-3-6-6-6C6 9 1 11 .5 14z" fill="url(#edgeTop)" />
        <path d="M12 12c-5 4-1 14 7 14 4 0 7-1 9-3-4 1-16 1-16-11z" fill="#0d4a92" />
        <path d="M17 16c-1 3 0 5 4 5 3 0 6 0 8-4v5l-3 2c-8 0-13-3-13-9z" fill="#d3d3d3" />
      </Svg>
    ),
  },
  {
    name: 'store',
    icon: (
      <Svg box="0 0 30 30" className="size-[30px]">
        <path d="M8 9V3q0-2 2-2h10q2 0 2 2v6" stroke="#111" strokeWidth="2.400" />
        <path d="M0.500 8h29v22H.5z" fill="#262626" />
        <path d="M9 13h5.500v5.500H9z" fill="#f04f24" />
        <path d="M15.500 13H21v5.500h-5.500z" fill="#7eb900" />
        <path d="M9 19.500h5.500V25H9z" fill="#20a3ee" />
        <path d="M15.500 19.500H21V25h-5.500z" fill="#feb902" />
      </Svg>
    ),
  },
  {
    name: 'explorer',
    icon: (
      <Svg box="0 0 30 30" className="size-[30px]">
        <path d="M1 3h12l2 4H1z" fill="#d69b12" />
        <path d="M1 6h28v19H1z" fill="#fcd561" />
        <path d="M6 15h18v11h-4v-5h-9v5H6z" fill="#3c8fd8" />
      </Svg>
    ),
  },
  {
    name: 'mail',
    icon: (
      <Svg box="0 0 32 30" className="h-[30px] w-8">
        <path d="M0 11L16 1l16 10v18H0z" fill="#0a5ba6" />
        <path d="M4 11h24v10H4z" fill="#fff" />
        <path d="M0 11l16 12 16-12v18H0z" fill="#1ba0ea" />
        <path d="M0 11l16 12L0 29zM32 11v18L18 18z" fill="#3fbcf4" />
      </Svg>
    ),
  },
  {
    name: 'chrome',
    icon: (
      <Svg box="0 0 32 32" className="ml-1 size-8">
        <circle cx="14" cy="15" r="14" fill="#2a9f4d" />
        <path d="M2 8a14 14 0 0124 0l-1 2H14l-5 7z" fill="#dd4436" />
        <path d="M14 9h12.500a14 14 0 01-12 20l6-11z" fill="#fccb2d" />
        <circle cx="14" cy="15" r="6.500" fill="#fff" />
        <circle cx="14" cy="15" r="5" fill="#3f7fe8" />
        <circle cx="21.500" cy="22" r="9.500" fill="#d8d5cf" />
        <path d="M14 28q2-5 7-5t8 5q-3 4-7.500 4T14 28z" fill="#f6f6f6" />
        <circle cx="21.500" cy="20" r="4.500" fill="#7b523c" />
        <path d="M16 20q-1-7 5.500-7t6 7l-2-3h-7z" fill="#1e1917" />
      </Svg>
    ),
  },
  {
    name: 'word',
    icon: (
      <Svg box="0 0 30 30" className="size-[30px]">
        <path d="M7 1h22v7H7z" fill="#41a5ee" />
        <path d="M7 8h22v7H7z" fill="#2b7cd3" />
        <path d="M7 15h22v7H7z" fill="#185abd" />
        <path d="M7 22h22v7H7z" fill="#103f91" />
        <path d="M0 7h16v16H0z" fill="#185abd" />
        <text x="8" y="20" textAnchor="middle" fontFamily="'Liberation Sans', sans-serif" fontSize="13" fontWeight="700" fill="#fff">
          W
        </text>
      </Svg>
    ),
  },
  {
    name: 'photos',
    icon: (
      <Svg box="0 0 30 30" className="size-[30px]">
        <path d="M1 1h28v28H1z" fill="#2c93dd" />
        <path d="M1 1h28v5L1 20z" fill="#3ca9ea" />
        <path d="M1 22l9-11 14 18H1z" fill="#10387a" />
        <path d="M17 20l4-4 8 8v5H24z" fill="#1b5aa6" />
        <circle cx="20" cy="8" r="2.500" fill="#fff" />
      </Svg>
    ),
  },
  { name: 'fusion', icon: <FusionLogo className="size-[29px]" />, active: true },
];

function Taskbar() {
  return (
    <div className="flex h-[46px] items-center bg-[#d3d3d3] font-['Open_Sans','Noto_Sans',sans-serif] text-[#111]">
      <div className="flex w-[61px] justify-center">
        <Svg box="0 0 20 20" className="size-5">
          <path d="M0 3l8.500-1.300V9.500H0zM9.500 1.500L20 0v9.500H9.500zM0 10.500h8.500v7.800L0 17zM9.500 10.500H20V20L9.500 18.500z" fill="#000" />
        </Svg>
      </div>
      <div className="flex h-[45px] w-[428px] items-center self-end bg-white">
        <Svg box="0 0 21 21" className="ml-[14px] size-[21px]">
          <circle cx="13" cy="7.500" r="6.500" stroke="#111" strokeWidth="1.500" />
          <path d="M8.500 12.500L1 20" stroke="#111" strokeWidth="1.500" />
        </Svg>
        <span className="ml-[14px] pt-1 text-[18px] tracking-[-0.150px] text-[#333]">Type here to search</span>
      </div>
      {apps.map((a) => (
        <div key={a.name} className={clsx('grid h-full w-[62px] shrink-0 place-items-center', a.active && 'bg-[#ececec]')}>
          {a.icon}
        </div>
      ))}
      <div className="ml-[157px] flex h-[25px] w-[60px] border-2 border-white bg-black">
        <div className="grid w-[50px] place-items-center bg-[#14954a] text-[17px] leading-none text-white">85%</div>
      </div>
      <Svg box="0 0 12 20" className="ml-[10px] h-5 w-3">
        <path d="M2 0h2v6H2zM8 0h2v6H8zM0 6h12v4q0 4-5 5v5H5v-5q-5-1-5-5z" fill="#fff" />
      </Svg>
      <Svg box="0 0 26 22" className="ml-[82px] h-[22px] w-[26px]">
        <circle cx="7" cy="10" r="6.500" fill="#9fd0f5" />
        <circle cx="14" cy="7" r="7" fill="#c3e2fa" />
        <circle cx="20" cy="11" r="5.500" fill="#8bc4f2" />
        <path d="M7 9h13v7H7z" fill="#a9d5f7" />
        <path d="M13 12q4 5 0 9-4-4 0-9z" fill="#1674c8" />
      </Svg>
      <div className="ml-[12px] flex w-[143px] gap-[10px] whitespace-nowrap pt-[5px] text-[17.500px] tracking-[-0.3px]">
        <span>32°C</span>
        <span>Light rain</span>
      </div>
      <Svg box="0 0 17 10" className="h-[10px] w-[17px]">
        <path d="M1 9l7.500-8L16 9" stroke="#111" strokeWidth="1.400" />
      </Svg>
      <Svg box="0 0 16 20" className="ml-[15px] h-5 w-4">
        <rect x="1" y="5" width="10" height="10" rx="2" stroke="#111" strokeWidth="1.300" />
        <path d="M11 9l4-2v6l-4-2M2 2q5-2 9 0M2 18q5 2 9 0" stroke="#111" strokeWidth="1.200" />
      </Svg>
      <Svg box="0 0 20 16" className="ml-[11px] h-4 w-5">
        <path d="M6 5h12v8H4V9" stroke="#111" strokeWidth="1.200" />
        <path d="M7 6.500h9.500v5H5.500zM18 7h2v4h-2zM0 3h6v3L4 8H2L0 6zM1 0h1v3H1zM4 0h1v3H4z" fill="#111" />
      </Svg>
      <Svg box="0 0 21 16" className="ml-[10px] h-4 w-[21px]">
        <path d="M4 14q-4-1-3-5 1-2 3-2 2-6 7-5 4 0 5 4 4 0 4 4 0 3-3 4z" fill="#e9e9e9" stroke="#222" strokeWidth="1.300" />
        <path d="M4 7q2-6 7-5 4 0 5 4l-7 3z" fill="#777" />
      </Svg>
      <span className="ml-[13px] w-[30px] pt-px text-[14.500px] tracking-[-0.3px]">ENG</span>
      <div className="ml-[8px] flex w-[78px] flex-col items-center whitespace-nowrap pt-[2px] text-[14.500px] leading-[22px] tracking-[-0.7px]">
        <span>3:21 PM</span>
        <span>7/21/2021</span>
      </div>
      <div className="relative ml-[20px]">
        <Svg box="0 0 21 20" className="h-5 w-[21px]">
          <path d="M0 0h21v15h-9l-3 4v-4H0z" fill="#000" />
          <path d="M3 4h15M3 7.500h15M3 11h9" stroke="#eee" strokeWidth="1.200" />
        </Svg>
        <span className="absolute left-[9px] top-[10px] grid size-5 place-items-center rounded-full border border-[#555] bg-[#d3d3d3]/80 text-[14px] text-black">
          1
        </span>
      </div>
      <div className="ml-auto h-full w-px bg-[#aaa]" />
    </div>
  );
}

export default function App() {
  return (
    <div className="h-[1076px] w-[1916px] overflow-hidden bg-white font-['Liberation_Sans',Arial,sans-serif]">
      <TitleBar />
      <DocumentBar />
      <Ribbon />
      <Viewport />
      <Timeline />
      <Taskbar />
    </div>
  );
}
